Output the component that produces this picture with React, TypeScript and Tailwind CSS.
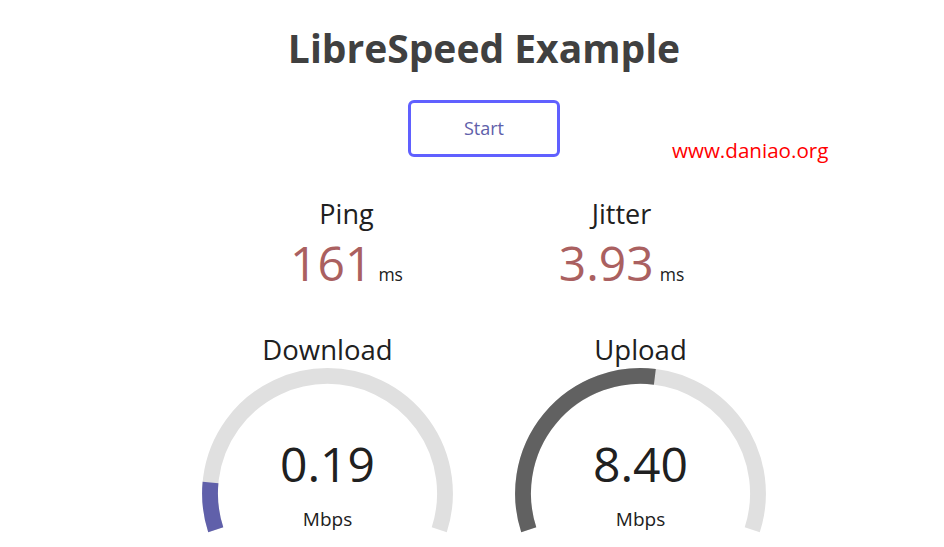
import React from "react";

const FONT = { fontFamily: '"Open Sans", "Noto Sans", sans-serif' };

function arcPath(cx: number, cy: number, r: number, a0: number, a1: number) {
  const x0 = cx + r * Math.cos(a0);
  const y0 = cy + r * Math.sin(a0);
  const x1 = cx + r * Math.cos(a1);
  const y1 = cy + r * Math.sin(a1);
  const large = a1 - a0 > Math.PI ? 1 : 0;
  return `M ${x0} ${y0} A ${r} ${r} 0 ${large} 1 ${x1} ${y1}`;
}

function Gauge({ name, value, amount, color }: { name: string; value: string; amount: number; color: string }) {
  const w = 307;
  const h = 240;
  const s = h * 0.0055;
  const lw = 12 * s;
  const cx = w / 2;
  const cy = h - 58 * s;
  const r = h / 1.8 - lw;
  const a0 = -Math.PI * 1.1;
  const aEnd = Math.PI * 0.1;
  const aVal = amount * Math.PI * 1.2 - Math.PI * 1.1;
  return (
    <div className="relative w-[307px] h-[240px] shrink-0">
      <svg width={w} height={h} className="absolute inset-0">
        <path d={arcPath(cx, cy, r, a0, aEnd)} stroke="#E0E0E0" strokeWidth={lw} fill="none" />
        <path d={arcPath(cx, cy, r, a0, aVal)} stroke={color} strokeWidth={lw} fill="none" />
      </svg>
      <div className="absolute left-0 top-[2px] w-full text-[27.5px] leading-[36px] text-[#202020]">{name}</div>
      <div className="absolute left-0 bottom-[74px] w-full text-[48px] leading-[64px] text-[#202020]">{value}</div>
      <div className="absolute left-0 bottom-[38px] w-full text-[19px] leading-[25px] text-[#202020]">Mbps</div>
    </div>
  );
}

function Stat({ name, value }: { name: string; value: string }) {
  return (
    <div className="w-[269px] h-[134px] flex flex-col items-center shrink-0">
      <div className="text-[27px] leading-[36px] text-[#202020]">{name}</div>
      <div className="flex items-baseline gap-[6px]">
        <span className="text-[48px] leading-[62px] text-[#AA6060]">{value}</span>
        <span className="text-[17.5px] text-[#202020]">ms</span>
      </div>
    </div>
  );
}

export default function App() {
  return (
    <div className="relative w-full h-[547px] overflow-hidden bg-white" style={FONT}>
      <div className="pl-6 flex flex-col items-center text-center">
        <h1 className="mt-[22px] text-[39px] leading-[52px] font-bold text-[#404040]">LibreSpeed Example</h1>
        <button className="mt-[26px] w-[152px] h-[57px] border-[3px] border-[#6060FF] rounded-[6px] text-[18px] text-[#6060AA] bg-transparent">
          Start
        </button>
        <div className="mt-[39px] flex gap-[6px]">
          <Stat name="Ping" value="161" />
          <Stat name="Jitter" value="3.93" />
        </div>
        <div className="flex gap-[6px]">
          <Gauge name="Download" value="0.19" amount={0.108} color="#6060AA" />
          <Gauge name="Upload" value="8.40" amount={0.5325} color="#616161" />
        </div>
      </div>
      <div className="absolute left-[672px] top-[136px] text-[20.6px] leading-[28px] text-[#FF0000]">www.daniao.org</div>
    </div>
  );
}
